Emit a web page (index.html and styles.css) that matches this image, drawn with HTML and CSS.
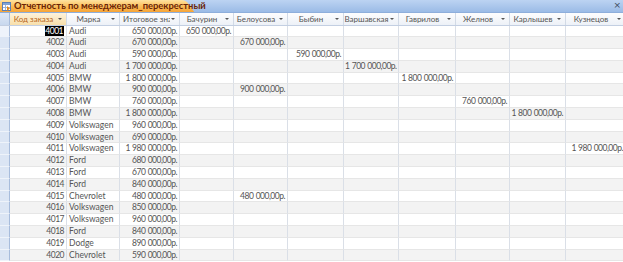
FILE: index.html
```html
<!DOCTYPE html>
<html lang="ru">
<head>
<meta charset="utf-8">
<title>Отчетность по менеджерам_перекрестный</title>
<link rel="stylesheet" href="styles.css">
</head>
<body>
<div class="window">
  <div class="tabbar">
    <div class="tab">
      <svg class="tab-icon" width="9" height="9" viewBox="0 0 9 9">
        <rect x="0.5" y="0.5" width="8" height="8" fill="#fff" stroke="#5a7fb5"/>
        <rect x="1" y="1" width="7" height="2" fill="#7fa3d6"/>
        <path d="M1 5.5H8M3.5 3V8" stroke="#9ab3d8" stroke-width="1"/>
        <path d="M5 4l3 2.5-3 2.5z" fill="#e08a1e"/>
      </svg>
      <span class="tab-title">Отчетность по менеджерам_перекрестный</span>
    </div>
    <span class="close">×</span>
  </div>
  <div class="sheet">
    <div class="row head">
      <div class="sel corner"></div>
      <div class="hc active"><span class="ht">Код заказа</span><span class="arr"></span></div>
      <div class="hc"><span class="ht">Марка</span><span class="arr"></span></div>
      <div class="hc"><span class="ht clip">Итоговое значение</span><span class="arr"></span></div>
      <div class="hc"><span class="ht">Бачурин</span><span class="arr"></span></div>
      <div class="hc"><span class="ht">Белоусова</span><span class="arr"></span></div>
      <div class="hc"><span class="ht">Быбин</span><span class="arr"></span></div>
      <div class="hc"><span class="ht">Варшавская</span><span class="arr"></span></div>
      <div class="hc"><span class="ht">Гаврилов</span><span class="arr"></span></div>
      <div class="hc"><span class="ht">Желнов</span><span class="arr"></span></div>
      <div class="hc"><span class="ht">Карлышев</span><span class="arr"></span></div>
      <div class="hc"><span class="ht">Кузнецов</span><span class="arr"></span></div>
    </div>
    <div id="rows"></div>
  </div>
</div>
<script src="app.js"></script>
</body>
</html>
```
FILE: styles.css
```css
* { box-sizing: border-box; }
html, body { margin: 0; padding: 0; }
body {
  width: 623px;
  height: 262px;
  overflow: hidden;
  background: #ffffff;
  font-family: Lato, "Liberation Sans", sans-serif;
  color: #555555;
}
.window { width: 623px; height: 262px; overflow: hidden; }

.tabbar {
  position: relative;
  height: 13px;
  background: linear-gradient(#bcd3f2, #9bbbe6);
  border-bottom: 1px solid #8eaedb;
  display: flex;
  align-items: flex-end;
}
.tab {
  position: relative;
  height: 12px;
  width: 181px;
  display: flex;
  align-items: center;
  gap: 3px;
  padding-left: 2px;
  background: linear-gradient(#ffe3a0, #fbbd58 55%, #f6a437);
  border-top-left-radius: 2px;
}
.tab::after {
  content: "";
  position: absolute;
  right: -9px;
  top: 0;
  width: 16px;
  height: 12px;
  background: linear-gradient(#ffe3a0, #fbbd58 55%, #f6a437);
  transform: skewX(35deg);
  border-top-right-radius: 4px;
}
.tab-icon { position: relative; z-index: 1; flex: none; }
.tab-title {
  position: relative;
  z-index: 1;
  font-size: 9.4px;
  font-weight: bold;
  color: #6a2406;
  line-height: 12px;
  white-space: nowrap;
}
.close {
  position: absolute;
  right: 2px;
  top: 0;
  font-size: 9px;
  line-height: 10px;
  color: #3d4a5e;
  font-family: "DejaVu Sans", sans-serif;
}

.sheet { width: 640px; }
.row {
  display: grid;
  grid-template-columns: 10px 57px 53px 60px 54px 54px 56px 55px 57px 54px 56px 60px;
  height: 11.8px;
}
.row.head {
  height: 12.5px;
  background: linear-gradient(#fdfdfe, #edf1f7);
  border-bottom: 1px solid #c3cfe2;
}
.hc {
  display: flex;
  align-items: center;
  border-right: 1px solid #d2dae6;
  font-size: 8px;
  color: #555;
  overflow: hidden;
  white-space: nowrap;
}
.hc .ht { flex: 1; text-align: center; overflow: hidden; }
.hc .ht.clip { text-align: left; padding-left: 3px; }
.hc .arr {
  flex: none;
  width: 0; height: 0;
  margin: 0 4px 0 1px;
  border-left: 2px solid transparent;
  border-right: 2px solid transparent;
  border-top: 2px solid #555;
}
.hc.active { background: linear-gradient(#fdf3dc, #f8dfaa); color: #b8661c; }
.sel {
  background: #dbe5f4;
  border-right: 1px solid #a7bcdc;
  border-bottom: 1px solid #eef3fa;
}
.sel.corner { background: linear-gradient(#dfe8f6, #c8d8ee); border-bottom: none; }
.sel.cur { background: #eef3fb; }

.c {
  font-size: 8.5px;
  line-height: 11px;
  white-space: nowrap;
  overflow: hidden;
  border-right: 1px solid #dadfe7;
  border-bottom: 1px solid #e6e6e6;
  padding: 0 3px;
}
.c.num { text-align: right; padding-right: 2px; letter-spacing: -0.5px; }
.c.txt { padding-left: 2px; }
.c.money { text-align: right; padding: 0 2px 0 1px; letter-spacing: -0.5px; word-spacing: 0.6px; }
.row.alt .c { background: #f3f3f3; }
.hl { background: #000; color: #fff; padding: 0 1px 0 0.5px; }
```
FILE: app.js
```js
var names = ["Бачурин","Белоусова","Быбин","Варшавская","Гаврилов","Желнов","Карлышев","Кузнецов"];
var data = [
  [4001,"Audi","650 000,00р.","Бачурин"],
  [4002,"Audi","670 000,00р.","Белоусова"],
  [4003,"Audi","590 000,00р.","Быбин"],
  [4004,"Audi","1 700 000,00р.","Варшавская"],
  [4005,"BMW","1 800 000,00р.","Гаврилов"],
  [4006,"BMW","900 000,00р.","Белоусова"],
  [4007,"BMW","760 000,00р.","Желнов"],
  [4008,"BMW","1 800 000,00р.","Карлышев"],
  [4009,"Volkswagen","960 000,00р.",""],
  [4010,"Volkswagen","690 000,00р.",""],
  [4011,"Volkswagen","1 980 000,00р.","Кузнецов"],
  [4012,"Ford","680 000,00р.",""],
  [4013,"Ford","670 000,00р.",""],
  [4014,"Ford","840 000,00р.",""],
  [4015,"Chevrolet","480 000,00р.","Белоусова"],
  [4016,"Volkswagen","850 000,00р.",""],
  [4017,"Volkswagen","960 000,00р.",""],
  [4018,"Ford","840 000,00р.",""],
  [4019,"Dodge","890 000,00р.",""],
  [4020,"Chevrolet","590 000,00р.",""]
];
var host = document.getElementById("rows");
data.forEach(function (d, i) {
  var row = document.createElement("div");
  row.className = "row" + (i % 2 ? " alt" : "");
  var sel = document.createElement("div");
  sel.className = "sel" + (i === 0 ? " cur" : "");
  row.appendChild(sel);
  var code = document.createElement("div");
  code.className = "c num";
  if (i === 0) {
    var s = document.createElement("span");
    s.className = "hl";
    s.textContent = d[0];
    code.appendChild(s);
  } else {
    code.textContent = d[0];
  }
  row.appendChild(code);
  var brand = document.createElement("div");
  brand.className = "c txt";
  brand.textContent = d[1];
  row.appendChild(brand);
  var total = document.createElement("div");
  total.className = "c money";
  total.textContent = d[2];
  row.appendChild(total);
  names.forEach(function (n) {
    var c = document.createElement("div");
    c.className = "c money";
    if (n === d[3]) c.textContent = d[2];
    row.appendChild(c);
  });
  host.appendChild(row);
});
```
